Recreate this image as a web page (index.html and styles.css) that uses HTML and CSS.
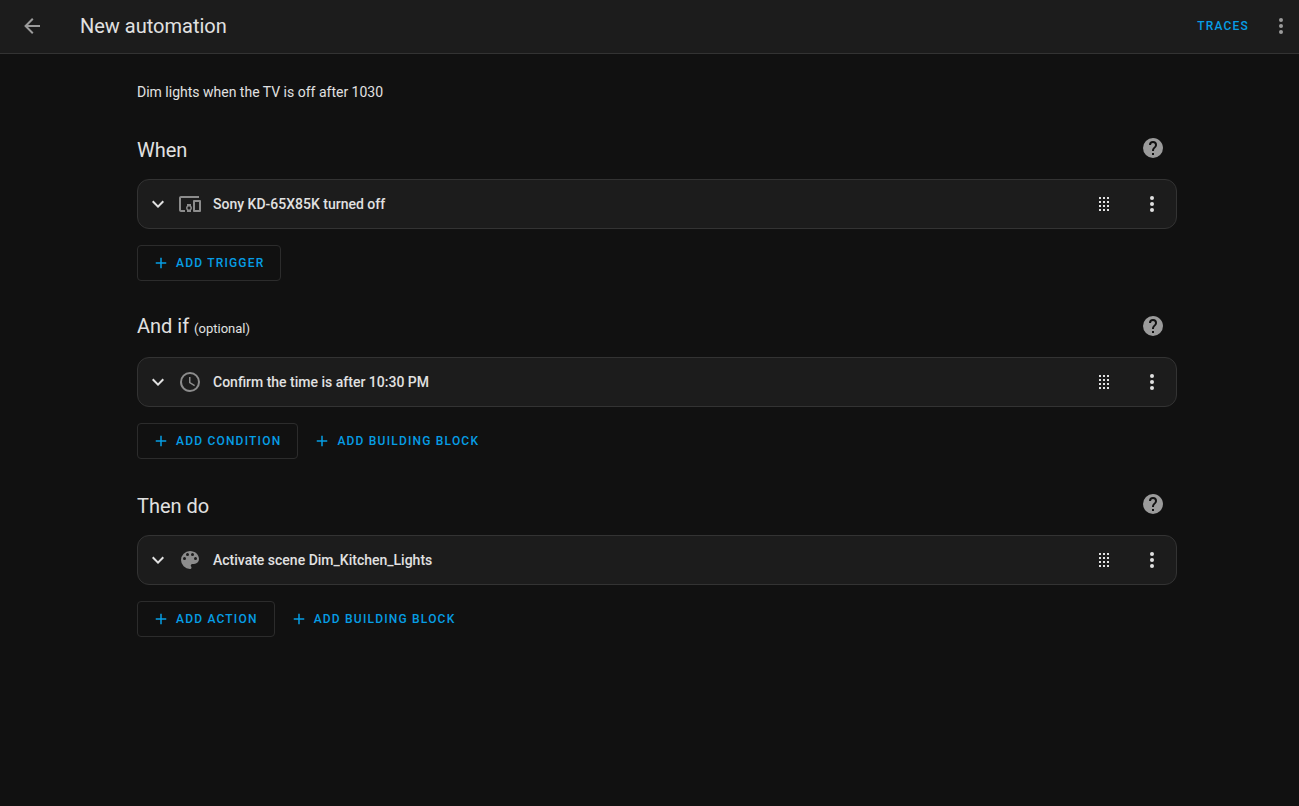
FILE: index.html
```
<!DOCTYPE html>
<html lang="en">
<head>
    <meta charset="UTF-8">
    <meta name="viewport" content="width=device-width, initial-scale=1.0">
    <title>New automation</title>
    <link rel="stylesheet" href="styles.css">
</head>
<body>
    <!-- Shared icons -->
    <svg class="sprite" aria-hidden="true">
        <symbol id="dots" viewBox="0 0 24 24">
            <circle cx="12" cy="6" r="2"/><circle cx="12" cy="12" r="2"/><circle cx="12" cy="18" r="2"/>
        </symbol>
        <symbol id="help" viewBox="0 0 24 24">
            <path d="M15.07,11.25L14.17,12.17C13.45,12.89 13,13.5 13,15H11V14.5C11,13.39 11.45,12.39 12.17,11.67L13.41,10.41C13.78,10.05 14,9.55 14,9C14,7.89 13.1,7 12,7A2,2 0 0,0 10,9H8A4,4 0 0,1 12,5A4,4 0 0,1 16,9C16,9.88 15.64,10.67 15.07,11.25M13,19H11V17H13M12,2A10,10 0 0,0 2,12A10,10 0 0,0 12,22A10,10 0 0,0 22,12C22,6.47 17.5,2 12,2Z"/>
        </symbol>
        <symbol id="chevron" viewBox="0 0 24 24">
            <path d="M7.41,8.58L12,13.17L16.59,8.58L18,10L12,16L6,10L7.41,8.58Z"/>
        </symbol>
        <symbol id="drag" viewBox="0 0 24 24">
            <path d="M7,5h2v2h-2zM11,5h2v2h-2zM15,5h2v2h-2zM7,9h2v2h-2zM11,9h2v2h-2zM15,9h2v2h-2zM7,13h2v2h-2zM11,13h2v2h-2zM15,13h2v2h-2zM7,17h2v2h-2zM11,17h2v2h-2zM15,17h2v2h-2z"/>
        </symbol>
        <symbol id="plus" viewBox="0 0 24 24">
            <path d="M19,13H13V19H11V13H5V11H11V5H13V11H19V13Z"/>
        </symbol>
    </svg>

    <header class="toolbar">
        <button class="icon-button back" aria-label="Back">
            <svg class="icon" viewBox="0 0 24 24"><path d="M20,11V13H8L13.5,18.5L12.08,19.92L4.16,12L12.08,4.08L13.5,5.5L8,11H20Z"/></svg>
        </button>
        <h1>New automation</h1>
        <button class="traces">TRACES</button>
        <button class="icon-button overflow" aria-label="Menu"><svg class="icon"><use href="#dots"/></svg></button>
    </header>

    <main class="content">
        <div class="editor">
            <p class="description">Dim lights when the TV is off after 1030</p>

            <section class="block">
                <div class="block-header">
                    <h2>When</h2>
                    <button class="icon-button help" aria-label="Learn about triggers"><svg class="icon"><use href="#help"/></svg></button>
                </div>
                <div class="card">
                    <button class="row" aria-expanded="false">
                        <svg class="icon"><use href="#chevron"/></svg>
                        <svg class="icon type" viewBox="0 0 24 24"><path d="M3 6H21V4H3C1.9 4 1 4.9 1 6V18C1 19.1 1.9 20 3 20H7V18H3V6M13 12H9V13.78C8.39 14.33 8 15.11 8 16C8 16.89 8.39 17.67 9 18.22V20H13V18.22C13.61 17.67 14 16.88 14 16S13.61 14.33 13 13.78V12M11 17.5C10.17 17.5 9.5 16.83 9.5 16S10.17 14.5 11 14.5 12.5 15.17 12.5 16 11.83 17.5 11 17.5M22 8H16C15.5 8 15 8.5 15 9V19C15 19.5 15.5 20 16 20H22C22.5 20 23 19.5 23 19V9C23 8.5 22.5 8 22 8M21 18H17V10H21V18Z"/></svg>
                        <span class="label">Sony KD-65X85K turned off</span>
                    </button>
                    <button class="icon-button" aria-label="Move trigger"><svg class="icon"><use href="#drag"/></svg></button>
                    <button class="icon-button" aria-label="Trigger menu"><svg class="icon"><use href="#dots"/></svg></button>
                </div>
                <div class="actions">
                    <button class="add outlined"><svg class="plus"><use href="#plus"/></svg>ADD TRIGGER</button>
                </div>
            </section>

            <section class="block">
                <div class="block-header">
                    <h2>And if <small>(optional)</small></h2>
                    <button class="icon-button help" aria-label="Learn about conditions"><svg class="icon"><use href="#help"/></svg></button>
                </div>
                <div class="card">
                    <button class="row" aria-expanded="false">
                        <svg class="icon"><use href="#chevron"/></svg>
                        <svg class="icon type" viewBox="0 0 24 24"><path d="M12,20A8,8 0 0,0 20,12A8,8 0 0,0 12,4A8,8 0 0,0 4,12A8,8 0 0,0 12,20M12,2A10,10 0 0,1 22,12A10,10 0 0,1 12,22C6.47,22 2,17.5 2,12A10,10 0 0,1 12,2M12.5,7V12.25L17,14.92L16.25,16.15L11,13V7H12.5Z"/></svg>
                        <span class="label">Confirm the time is after 10:30 PM</span>
                    </button>
                    <button class="icon-button" aria-label="Move condition"><svg class="icon"><use href="#drag"/></svg></button>
                    <button class="icon-button" aria-label="Condition menu"><svg class="icon"><use href="#dots"/></svg></button>
                </div>
                <div class="actions">
                    <button class="add outlined"><svg class="plus"><use href="#plus"/></svg>ADD CONDITION</button>
                    <button class="add"><svg class="plus"><use href="#plus"/></svg>ADD BUILDING BLOCK</button>
                </div>
            </section>

            <section class="block">
                <div class="block-header">
                    <h2>Then do</h2>
                    <button class="icon-button help" aria-label="Learn about actions"><svg class="icon"><use href="#help"/></svg></button>
                </div>
                <div class="card">
                    <button class="row" aria-expanded="false">
                        <svg class="icon"><use href="#chevron"/></svg>
                        <svg class="icon type" viewBox="0 0 24 24"><path d="M17.5,12A1.5,1.5 0 0,1 16,10.5A1.5,1.5 0 0,1 17.5,9A1.5,1.5 0 0,1 19,10.5A1.5,1.5 0 0,1 17.5,12M14.5,8A1.5,1.5 0 0,1 13,6.5A1.5,1.5 0 0,1 14.5,5A1.5,1.5 0 0,1 16,6.5A1.5,1.5 0 0,1 14.5,8M9.5,8A1.5,1.5 0 0,1 8,6.5A1.5,1.5 0 0,1 9.5,5A1.5,1.5 0 0,1 11,6.5A1.5,1.5 0 0,1 9.5,8M6.5,12A1.5,1.5 0 0,1 5,10.5A1.5,1.5 0 0,1 6.5,9A1.5,1.5 0 0,1 8,10.5A1.5,1.5 0 0,1 6.5,12M12,3A9,9 0 0,0 3,12A9,9 0 0,0 12,21A1.5,1.5 0 0,0 13.5,19.5C13.5,19.11 13.35,18.76 13.11,18.5C12.88,18.23 12.73,17.88 12.73,17.5A1.5,1.5 0 0,1 14.23,16H16A5,5 0 0,0 21,11C21,6.58 16.97,3 12,3Z"/></svg>
                        <span class="label">Activate scene Dim_Kitchen_Lights</span>
                    </button>
                    <button class="icon-button" aria-label="Move action"><svg class="icon"><use href="#drag"/></svg></button>
                    <button class="icon-button" aria-label="Action menu"><svg class="icon"><use href="#dots"/></svg></button>
                </div>
                <div class="actions">
                    <button class="add outlined"><svg class="plus"><use href="#plus"/></svg>ADD ACTION</button>
                    <button class="add"><svg class="plus"><use href="#plus"/></svg>ADD BUILDING BLOCK</button>
                </div>
            </section>
        </div>
    </main>
</body>
</html>
```
FILE: styles.css
```
* {
    box-sizing: border-box;
}

body {
    margin: 0;
    min-height: 100vh;
    background: #111111;
    color: #e1e1e1;
    font-family: Roboto, sans-serif;
    font-size: 14px;
    line-height: 20px;
}

h1, h2, p {
    margin: 0;
}

button {
    display: flex;
    align-items: center;
    padding: 0;
    border: none;
    background: none;
    color: inherit;
    font: inherit;
    cursor: pointer;
}

.sprite {
    display: none;
}

.icon {
    flex: none;
    width: 24px;
    height: 24px;
    fill: currentColor;
}

.icon-button {
    flex: none;
    justify-content: center;
    width: 48px;
    height: 48px;
}

.toolbar {
    display: flex;
    align-items: center;
    height: 54px;
    padding-left: 8px;
    padding-bottom: 1px;
    background: #1c1c1c;
    border-bottom: 1px solid #333333;
}

.toolbar h1 {
    flex: 1;
    padding-left: 24px;
    font-size: 20px;
    font-weight: 400;
}

.back, .overflow, .help {
    color: #9b9b9b;
}

.toolbar .overflow {
    width: 36px;
}

.traces, .add {
    color: #069ee5;
    font-size: 12px;
    font-weight: 500;
    letter-spacing: 0.1em;
}

.traces {
    height: 36px;
    padding: 0 14px;
}

.content {
    padding: 28px 0 28px 15px;
}

.editor {
    max-width: 1040px;
    margin: 0 auto;
}

.description {
    margin-bottom: 22px;
}

.block {
    margin-bottom: 21px;
}

.block-header {
    display: flex;
    align-items: center;
    justify-content: space-between;
    margin-bottom: 7px;
}

.block-header h2 {
    padding-top: 3px;
    font-size: 20px;
    font-weight: 400;
}

.block-header small {
    font-size: 13px;
}

.card {
    display: flex;
    background: #1c1c1c;
    border: 1px solid #333333;
    border-radius: 12px;
}

.row {
    flex: 1;
    gap: 8px;
    height: 48px;
    padding-left: 8px;
    text-align: left;
}

.type {
    color: #8c8c8c;
}

.label {
    padding: 0 0 1px 3px;
    font-weight: 500;
}

.actions {
    display: flex;
    margin-top: 16px;
}

.add {
    gap: 6px;
    height: 36px;
    padding: 0 16px 0 15px;
}

.outlined {
    padding: 0 16px 0 14px;
    border: 1px solid #2c2c2c;
    border-radius: 4px;
}

.plus {
    width: 18px;
    height: 18px;
    fill: currentColor;
}
```
